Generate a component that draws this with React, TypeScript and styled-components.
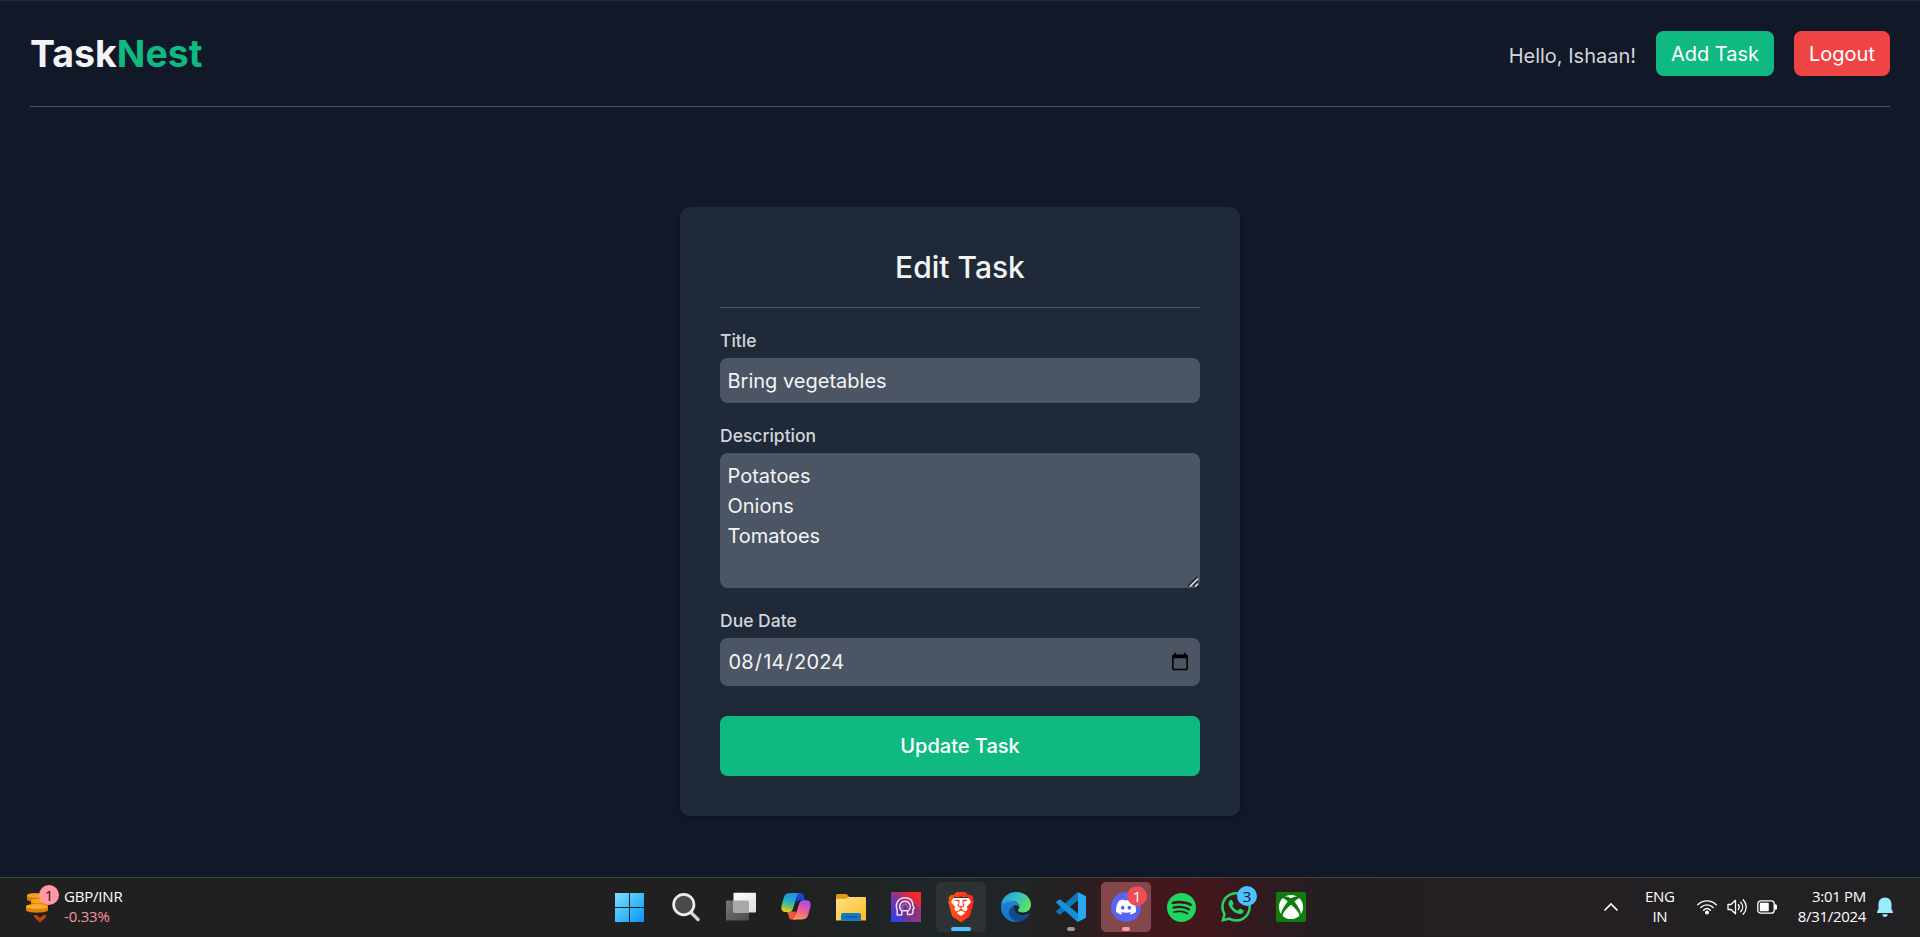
import React from "react";
import styled, { createGlobalStyle } from "styled-components";
import { SiBrave, SiDiscord, SiSpotify, SiWhatsapp } from "react-icons/si";
import { FaXbox } from "react-icons/fa";

const GlobalStyle = createGlobalStyle`
  *, *::before, *::after { box-sizing: border-box; }
  html, body { margin: 0; height: 100%; overflow: hidden; }
  body {
    background: #111827;
    color: #f3f4f6;
    font-family: Inter, "Liberation Sans", sans-serif;
    font-size: 20px;
    line-height: 30px;
  }
`;

const Screen = styled.div`
  display: flex;
  flex-direction: column;
  height: 937px;
  border-top: 1px solid #24292c;
`;

const Page = styled.div`
  flex: 1;
  display: flex;
  flex-direction: column;
  padding: 0 30px;
`;

const Header = styled.header`
  display: flex;
  justify-content: space-between;
  align-items: center;
  height: 106px;
  border-bottom: 1px solid #4b5563;
`;

const Logo = styled.h1`
  margin: 0 0 1px;
  font-size: 37.5px;
  line-height: 45px;
  font-weight: 700;
  span { color: #10b981; }
`;

const Nav = styled.nav`
  display: flex;
  align-items: center;
  gap: 20px;
`;

const Greeting = styled.p`
  margin: 4px 0 0;
  color: #d1d5db;
`;

const NavButton = styled.button<{ $color: string; $width: number }>`
  height: 45px;
  width: ${(p) => p.$width}px;
  padding: 0;
  border: 0;
  border-radius: 7.5px;
  background: ${(p) => p.$color};
  color: #fff;
  font: inherit;
`;

const Card = styled.form`
  align-self: center;
  width: 560px;
  margin-top: 100px;
  padding: 40px;
  border-radius: 10px;
  background: #1f2937;
  box-shadow: 0 5px 7.5px -1px rgba(0, 0, 0, 0.1), 0 2.5px 5px -2px rgba(0, 0, 0, 0.1);
`;

const CardTitle = styled.h2`
  margin: 0 0 20px;
  padding-bottom: 20px;
  border-bottom: 1px solid #4b5563;
  font-size: 30px;
  line-height: 40px;
  font-weight: 500;
  text-align: center;
`;

const Field = styled.label`
  display: flex;
  flex-direction: column;
  gap: 5px;
  margin-bottom: 20px;
`;

const FieldName = styled.span`
  color: #d1d5db;
  font-size: 17.5px;
  line-height: 25px;
  font-weight: 500;
`;

const Input = styled.input<{ $height?: number }>`
  width: 100%;
  height: ${(p) => p.$height ?? 45}px;
  padding: 7.5px;
  border: 0;
  border-radius: 7.5px;
  background: #4b5563;
  color: #f3f4f6;
  font: inherit;
  outline: 0;
  &::-webkit-datetime-edit { letter-spacing: 0.17px; }
  &::-webkit-calendar-picker-indicator { margin-right: 1px; }
`;

const TextArea = styled.textarea`
  display: block;
  width: 100%;
  height: 135px;
  padding: 7.5px;
  border: 0;
  border-radius: 7.5px;
  background: #4b5563;
  color: #f3f4f6;
  font: inherit;
  outline: 0;
  resize: none;
`;

const ResizableBox = styled.div`
  position: relative;
`;

const Grip = styled.svg`
  position: absolute;
  right: 1px;
  bottom: 1px;
`;

const Submit = styled.button`
  display: block;
  width: 100%;
  height: 60px;
  margin-top: 30px;
  padding: 0;
  border: 0;
  border-radius: 7.5px;
  background: #10b981;
  color: #fff;
  font: inherit;
  font-weight: 500;
`;

const Taskbar = styled.footer`
  display: flex;
  align-items: center;
  height: 60px;
  padding-bottom: 1px;
  border-top: 1px solid #434345;
  background: linear-gradient(90deg, #212020 0, #202020 780px, #1f2627 940px, #1f2526 1010px,
    #262020 1070px, #42181c 1150px, #43171c 1200px, #301a1e 1260px, #241e22 1320px, #232024 1700px, #212022 1920px);
  color: #fff;
  font-family: "Open Sans", "Noto Sans", sans-serif;
  font-size: 15px;
  line-height: 20px;
`;

const Widget = styled.div`
  display: flex;
  align-items: center;
  gap: 5px;
  width: 606px;
  padding-left: 25px;
`;

const Lines = styled.div<{ $align?: string; $spacing?: number }>`
  margin-top: -2px;
  text-align: ${(p) => p.$align ?? "left"};
  letter-spacing: ${(p) => p.$spacing ?? -0.3}px;
  white-space: nowrap;
`;

const Change = styled.div`
  color: #f794a0;
`;

const Apps = styled.div`
  display: flex;
  gap: 5px;
`;

const AppCell = styled.div<{ $bg?: string; $mark?: string; $markWidth?: number }>`
  position: relative;
  display: flex;
  align-items: center;
  justify-content: center;
  width: 50px;
  height: 50px;
  border-radius: 5px;
  background: ${(p) => p.$bg ?? "transparent"};
  svg { display: block; }
  &::after {
    content: "";
    position: absolute;
    bottom: 1px;
    left: 50%;
    transform: translateX(-50%);
    width: ${(p) => p.$markWidth ?? 8}px;
    height: 4px;
    border-radius: 2px;
    background: ${(p) => p.$mark ?? "transparent"};
  }
`;

const Badge = styled.span<{ $bg: string; $fg: string }>`
  position: absolute;
  top: 4px;
  right: 4px;
  width: 20px;
  height: 20px;
  border-radius: 50%;
  background: ${(p) => p.$bg};
  color: ${(p) => p.$fg};
  font-size: 15px;
  line-height: 20px;
  text-align: center;
`;

const WidgetIcon = styled.div`
  position: relative;
  width: 34px;
  height: 40px;
  margin-top: -4px;
  svg { display: block; }
  ${Badge} { top: 0; right: 0; }
`;

const Disc = styled.div<{ $bg: string }>`
  display: flex;
  align-items: center;
  justify-content: center;
  width: 30px;
  height: 30px;
  border-radius: 50%;
  background: ${(p) => p.$bg};
`;

const Tray = styled.div`
  display: flex;
  align-items: center;
  margin-left: auto;
  padding-right: 27px;
`;

const Language = styled.div`
  margin: 0 22px 0 27px;
`;

const Status = styled.div`
  display: flex;
  align-items: center;
  gap: 10px;
  margin-right: 21px;
`;

const Bell = styled.svg`
  margin-left: 11px;
`;

const CoinsIcon = () => (
  <svg width="34" height="40" viewBox="0 0 34 40">
    <path d="M2 10.500c0-3 17-3 17 0v4c0 3-17 3-17 0z" fill="#dc780c" />
    <ellipse cx="10.500" cy="10.500" rx="8.500" ry="2.300" fill="#f5a21f" />
    <path d="M6 16c0-3 17-3 17 0v4c0 3-17 3-17 0z" fill="#e07b0a" />
    <ellipse cx="14.500" cy="16" rx="8.500" ry="2.300" fill="#f7a521" />
    <path d="M1 21.500c0-3.500 22-3.500 22 0V25c0 3.500-22 3.500-22 0z" fill="#e58109" />
    <ellipse cx="12" cy="21.500" rx="11" ry="2.500" fill="#f8ab28" />
    <path d="M9 30h2.400l3.600 2.800 3.600-2.800H21l-.4 2.500-5.600 5-5.600-5z" fill="#c8420f" />
  </svg>
);

const WindowsIcon = () => (
  <svg width="32" height="30" viewBox="0 0 32 30">
    <defs>
      <linearGradient id="win" x1="0" y1="0" x2="29" y2="29" gradientUnits="userSpaceOnUse">
        <stop offset="0" stopColor="#86dcff" />
        <stop offset=".5" stopColor="#3fbffb" />
        <stop offset="1" stopColor="#0a93fb" />
      </linearGradient>
    </defs>
    <path fill="url(#win)" d="M0 1h14v14H0zM15 1h14v14H15zM0 16h14v14H0zM15 16h14v14H15z" />
  </svg>
);

const SearchIcon = () => (
  <svg width="30" height="30" viewBox="0 0 30 30">
    <path d="M20 20.500l7 7" stroke="#d3d5da" strokeWidth="3.400" strokeLinecap="round" />
    <circle cx="12.800" cy="12.600" r="10.200" fill="#4a4a4a" stroke="#ececee" strokeWidth="2.700" />
  </svg>
);

const TaskViewIcon = () => (
  <svg width="30" height="30" viewBox="0 0 30 30">
    <defs>
      <linearGradient id="tvf" x2="1" y2="1">
        <stop stopColor="#fff" />
        <stop offset="1" stopColor="#dedede" />
      </linearGradient>
      <linearGradient id="tvb" x2="1" y2="1">
        <stop stopColor="#777" />
        <stop offset="1" stopColor="#4b4b4b" />
      </linearGradient>
    </defs>
    <rect x="0" y="8.500" width="23" height="20" rx="1" fill="url(#tvb)" />
    <rect x="7.500" y=".8" width="22.500" height="19.700" rx="1" fill="url(#tvf)" />
    <path d="M7.500 8.500h14.500a1 1 0 0 1 1 1v11H8.500a1 1 0 0 1-1-1z" fill="#a9a9a9" />
  </svg>
);

const CopilotIcon = () => (
  <svg width="30" height="30" viewBox="0 0 30 30">
    <defs>
      <linearGradient id="cpa" x1=".6" y1="0" x2=".3" y2="1">
        <stop stopColor="#1a8fe8" />
        <stop offset=".4" stopColor="#1fa8d4" />
        <stop offset=".7" stopColor="#5fc06a" />
        <stop offset="1" stopColor="#f3cf10" />
      </linearGradient>
      <linearGradient id="cpb" x1=".7" y1="0" x2=".3" y2="1">
        <stop stopColor="#a24df0" />
        <stop offset=".5" stopColor="#ef5b9a" />
        <stop offset="1" stopColor="#fd9a4c" />
      </linearGradient>
    </defs>
    <path d="M15 1h4.500c2.500 0 3 2 3.500 4l1 3.200h-5c-2 0-2.700 1.500-3.300 3.300z" fill="#1746cf" />
    <path d="M15 27.500h-4.500C8.500 27.500 8 25.500 7.400 23L6 19.500h5c2 0 3-1.500 3.600-3.500z" fill="#f0583c" />
    <path d="M10 1h9.500c-2.500 0-3.400 2.400-4.200 5l-3 10c-.8 2.500-1.800 4-4.300 4H4.300C1 20-.3 17.500.6 13.500l2.200-8C3.700 2.300 6 1 10 1z" fill="url(#cpa)" />
    <path d="M20 27.500h-9.500c2.500 0 3.400-2.400 4.200-5l3-10c.8-2.500 1.800-4.200 4.300-4.200h3.700c3.300 0 4.600 2.500 3.700 6.500l-2.200 8.200C26.300 26.200 24 27.500 20 27.500z" fill="url(#cpb)" />
    <path d="M15.600 11.500 19 8.300h3c-2.500 0-3.500 1.700-4.300 4.200l-2.200 7h-4.300c.5-.8.800-2 1.200-3.500z" fill="#202020" />
  </svg>
);

const FolderIcon = () => (
  <svg width="30" height="30" viewBox="0 0 30 30">
    <defs>
      <linearGradient id="fld" x2="1" y2="1">
        <stop stopColor="#ffe08a" />
        <stop offset="1" stopColor="#f9bd20" />
      </linearGradient>
    </defs>
    <path d="M0 9V3.500Q0 2 1.500 2h8q1 0 2 1l2.500 2.500L11 9z" fill="#dd9a0a" />
    <path d="M0 8q0-1.200 1.500-1.200h8.300L13 5h16q1 0 1 1v22.500H0z" fill="url(#fld)" />
    <path d="M5 28.800V23q0-2 2-2h16q2 0 2 2v5.800z" fill="#1478c8" />
    <path d="M8.500 24.800h13" stroke="#0b4d91" strokeWidth="1.200" />
  </svg>
);

const HeadIcon = () => (
  <svg width="30" height="30" viewBox="0 0 30 30">
    <defs>
      <linearGradient id="hd" x1="0" y1="1" x2="1" y2="0">
        <stop stopColor="#1c45f5" />
        <stop offset=".45" stopColor="#7a359e" />
        <stop offset=".85" stopColor="#fb2728" />
      </linearGradient>
      <linearGradient id="hs" x1=".3" y1=".2" x2="1" y2="1">
        <stop stopColor="#472a86" />
        <stop offset="1" stopColor="#a03b78" />
      </linearGradient>
    </defs>
    <path d="M0 0h30v30H0z" fill="url(#hd)" />
    <path d="M7 22l14-13 9 9v12H15z" fill="url(#hs)" opacity=".6" />
    <g fill="none" stroke="#f1dcf0" strokeWidth="1.500" strokeLinejoin="round" strokeLinecap="round">
      <path d="M10.800 20v3H6.200v-4.500C4 12.500 6.500 5.800 14 5.800c5.500 0 7.800 3.500 7.900 7.500l1.300 3-1.300.8v3.200q0 2.200-2.400 2.200h-3v-3.500" />
      <path d="M10.800 20v-1.200C6.800 15.500 9 9.200 14 9.200s7.300 6 3.200 9.600h-5" />
      <path d="M12 17c-2-2-.8-5 2-5s4 3 2 5" strokeWidth="1" opacity=".4" />
    </g>
  </svg>
);

const BraveIcon = () => (
  <svg width="32" height="30" viewBox="0 0 32 30">
    <defs>
      <linearGradient id="brv">
        <stop stopColor="#ff5a12" />
        <stop offset="1" stopColor="#fb2420" />
      </linearGradient>
    </defs>
    <path d="M8 6h16l3 5-3 11-8 7-8-7-3-11z" fill="#fff" />
    <SiBrave x={1} y={0} size={30} style={{ fill: "url(#brv)" }} />
  </svg>
);

const EdgeIcon = () => (
  <svg width="30" height="30" viewBox="0 0 30 30">
    <defs>
      <linearGradient id="eg" x1="0" y1=".2" x2="1" y2=".6">
        <stop stopColor="#239bdc" />
        <stop offset=".5" stopColor="#35c1c5" />
        <stop offset="1" stopColor="#65e256" />
      </linearGradient>
      <linearGradient id="eb" x1=".2" y1="0" x2=".7" y2="1">
        <stop stopColor="#229be8" />
        <stop offset="1" stopColor="#0c5cb4" />
      </linearGradient>
    </defs>
    <path d="M.2 13C1 5.500 7 0 15 0c9 0 15 6 15 12.500 0 5-3.700 8-8 8-3.500 0-5-1.200-5-2.200 0-.8 1.300-1.300 1.300-3.300 0-3-3.200-6-7.700-6C6.500 9 2 10.500.2 13z" fill="url(#eg)" />
    <path d="M.2 13C2 9.800 6 8.500 9.800 9c5 .2 8.500 3.200 8.500 6-1.200-1.500-3-1.800-4.300-1.800-3.500.5-5 3.500-4.500 7.300.6 4.500 4.500 8 9.500 9C8.500 32-.8 24.500.2 13z" fill="url(#eb)" />
    <path d="M13 13.500c-3 1-5.800 4-5 8.500.7 4.500 5 8 9.500 7.800 5-.5 9-3.500 11.300-7.500.3-.6-.1-1-.8-.6-7.500 3.500-15.500.5-15-8.200z" fill="#134b91" />
    <path d="M8 17c-1.500 5.500 2 11.500 8.500 12.900C7.500 30.600.5 24 .1 15.500 1 11 7.500 9.500 12 11.500 10 12.500 8.500 14.500 8 17z" fill="#167bd0" opacity=".8" />
  </svg>
);

const CodeIcon = () => (
  <svg width="30" height="30" viewBox="0 0 30 30">
    <path d="M22 0v8.500L4.500 22.300q-.9.700-1.700 0L.6 20.500q-1-.9 0-1.800L21 .4z" fill="#0f75bb" />
    <path d="M22 30v-8.500L4.500 7.700q-.9-.7-1.700 0L.6 9.500q-1 .9 0 1.800L21 29.600z" fill="#1491d8" />
    <path d="M22 .3 28.700 3.500q1.300.7 1.300 2v19q0 1.300-1.300 2L22 29.700z" fill="#2ba7f1" />
  </svg>
);

const ChevronIcon = () => (
  <svg width="14" height="10" viewBox="0 0 14 10">
    <path d="M1 8l6-6 6 6" fill="none" stroke="#fff" strokeWidth="1.700" strokeLinecap="round" />
  </svg>
);

const WifiIcon = () => (
  <svg width="20" height="16" viewBox="0 0 20 16" fill="none" stroke="#fff" strokeWidth="1.400" strokeLinecap="round">
    <path d="M.8 5.800c5.200-5.200 13.200-5.200 18.400 0M3.800 8.500c3.600-3.500 8.800-3.500 12.400 0M6.600 11.200c2-1.900 4.800-1.900 6.800 0" />
    <circle cx="10" cy="13.600" r="1.300" fill="#fff" />
  </svg>
);

const SpeakerIcon = () => (
  <svg width="20" height="18" viewBox="0 0 20 18" fill="none" stroke="#fff" strokeWidth="1.300" strokeLinecap="round" strokeLinejoin="round">
    <path d="M1 6.500v5h3l4.500 4.200V2.300L4 6.500zM11.300 6.500c1.200 1.500 1.200 3.500 0 5M13.700 4.200c2.600 2.800 2.600 6.800 0 9.600M16.200 1.800c4 4.300 4 10.100 0 14.400" />
  </svg>
);

const BatteryIcon = () => (
  <svg width="20" height="14" viewBox="0 0 20 14">
    <rect x=".8" y=".8" width="16.400" height="12.400" rx="3" fill="none" stroke="#fff" strokeWidth="1.300" />
    <rect x="2.800" y="2.800" width="9" height="8.400" rx="1" fill="#fff" />
    <path d="M17.500 4.300h1q1.500 0 1.500 1.500v2.400q0 1.500-1.500 1.500h-1z" fill="#fff" />
  </svg>
);

export default function App() {
  return (
    <>
      <GlobalStyle />
      <Screen>
        <Page>
          <Header>
            <Logo>Task<span>Nest</span></Logo>
            <Nav>
              <Greeting>Hello, Ishaan!</Greeting>
              <NavButton $color="#10b981" $width={118}>Add Task</NavButton>
              <NavButton $color="#ef4444" $width={96}>Logout</NavButton>
            </Nav>
          </Header>
          <Card>
            <CardTitle>Edit Task</CardTitle>
            <Field>
              <FieldName>Title</FieldName>
              <Input defaultValue="Bring vegetables" />
            </Field>
            <Field>
              <FieldName>Description</FieldName>
              <ResizableBox>
                <TextArea spellCheck={false} defaultValue={"Potatoes\nOnions\nTomatoes"} />
                <Grip width="11" height="11" viewBox="0 0 11 11" fill="none" strokeWidth="1.700">
                  <path d="M0 10.200 9.200 1M5.200 10.200 9.800 5.600" stroke="#1c1f24" />
                  <path d="M1.800 10.700 10 2.500M7 10.700 10 7.700" stroke="#d4d4d4" />
                </Grip>
              </ResizableBox>
            </Field>
            <Field>
              <FieldName>Due Date</FieldName>
              <Input type="date" $height={48} defaultValue="2024-08-14" />
            </Field>
            <Submit type="button">Update Task</Submit>
          </Card>
        </Page>
        <Taskbar>
          <Widget>
            <WidgetIcon>
              <CoinsIcon />
              <Badge $bg="#ff98a4" $fg="#201416">1</Badge>
            </WidgetIcon>
            <Lines $spacing={-0.2}>
              <div>GBP/INR</div>
              <Change>-0.33%</Change>
            </Lines>
          </Widget>
          <Apps>
            <AppCell><WindowsIcon /></AppCell>
            <AppCell><SearchIcon /></AppCell>
            <AppCell><TaskViewIcon /></AppCell>
            <AppCell><CopilotIcon /></AppCell>
            <AppCell><FolderIcon /></AppCell>
            <AppCell><HeadIcon /></AppCell>
            <AppCell $bg="#2d3334" $mark="#4cc2ff" $markWidth={20}><BraveIcon /></AppCell>
            <AppCell><EdgeIcon /></AppCell>
            <AppCell $mark="#9b9797"><CodeIcon /></AppCell>
            <AppCell $bg="#84474c" $mark="#ff98a4">
              <Disc $bg="#5865f2"><SiDiscord size={20} color="#fff" /></Disc>
              <Badge $bg="#ea4f55" $fg="#fff">1</Badge>
            </AppCell>
            <AppCell><SiSpotify size={29} color="#1ed760" /></AppCell>
            <AppCell>
              <SiWhatsapp size={30} color="#25d366" />
              <Badge $bg="#4cc2ff" $fg="#10202a">3</Badge>
            </AppCell>
            <AppCell>
              <svg width="30" height="30" viewBox="0 0 30 30">
                <rect width="30" height="30" rx="2" fill="#107c10" />
                <FaXbox x={2.5} y={2.5} size={25} color="#fff" />
              </svg>
            </AppCell>
          </Apps>
          <Tray>
            <ChevronIcon />
            <Language>
              <Lines $align="center">
                <div>ENG</div>
                <div>IN</div>
              </Lines>
            </Language>
            <Status>
              <WifiIcon />
              <SpeakerIcon />
              <BatteryIcon />
            </Status>
            <Lines $align="right">
              <div>3:01 PM</div>
              <div>8/31/2024</div>
            </Lines>
            <Bell width="16" height="20" viewBox="0 0 16 20" fill="#99ebff">
              <path d="M8 .5c3.900 0 6.500 2.900 6.500 6.500v5l1.500 3q.3 1-.7 1H.7q-1 0-.7-1l1.500-3V7C1.500 3.400 4.100.5 8 .5zM5.300 17.200h5.400C10.500 19 9.500 20 8 20s-2.500-1-2.700-2.800z" />
            </Bell>
          </Tray>
        </Taskbar>
      </Screen>
    </>
  );
}
